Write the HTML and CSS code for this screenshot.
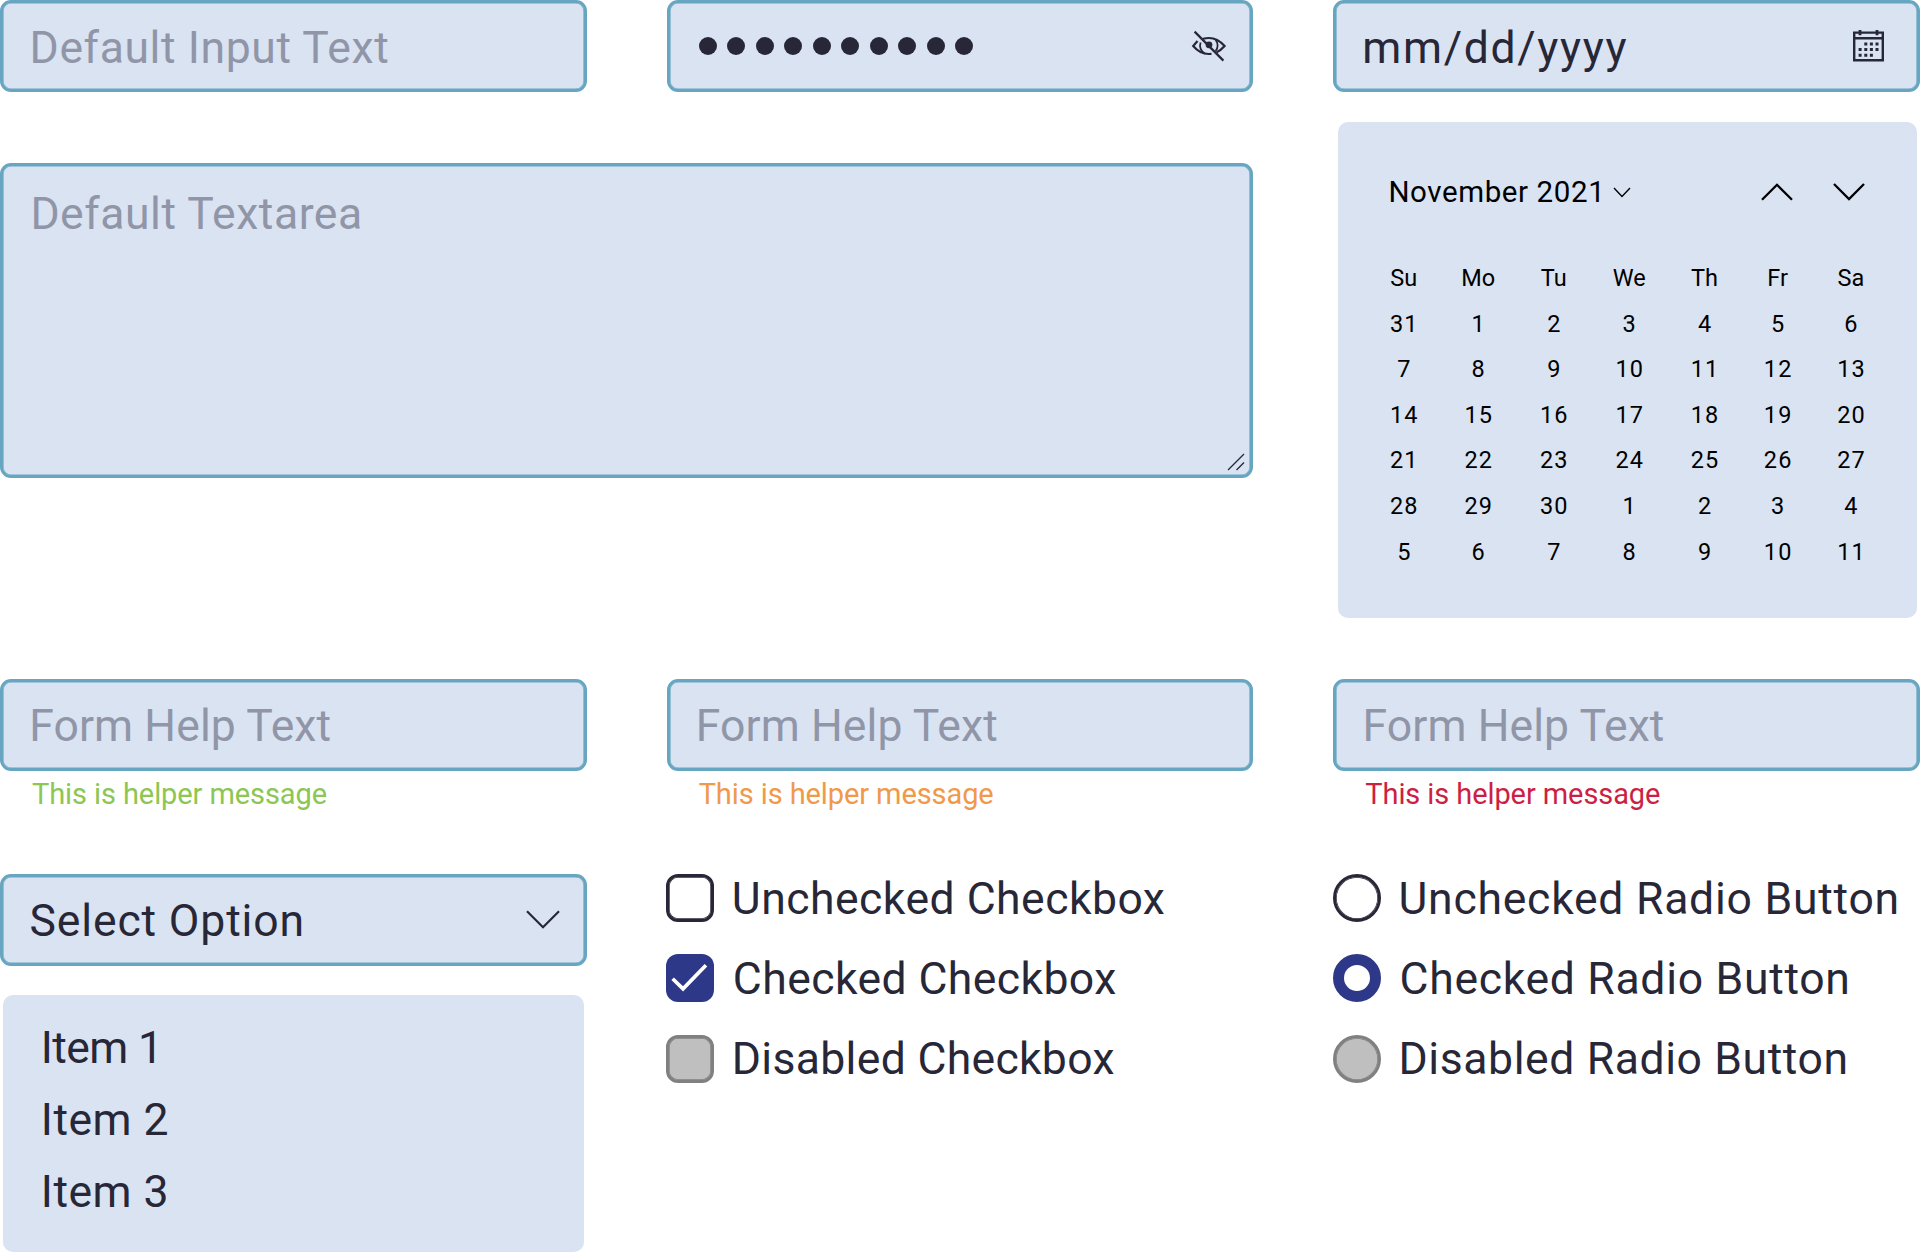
FILE: index.html
```
<!DOCTYPE html>
<html lang="en">
<head>
<meta charset="utf-8">
<title>Form elements</title>
<link rel="stylesheet" href="styles.css">
</head>
<body>
<main class="page">
  <section class="top">
    <div class="left">
      <div class="pair">
        <div class="field placeholder"><span class="t-input">Default Input Text</span></div>
        <div class="field password">
          <div class="dots"><i class="dot"></i><i class="dot"></i><i class="dot"></i><i class="dot"></i><i class="dot"></i><i class="dot"></i><i class="dot"></i><i class="dot"></i><i class="dot"></i><i class="dot"></i></div>
          <svg class="eye" width="36" height="32" viewBox="0 0 36 32" fill="none" stroke="currentColor" stroke-width="2.2">
            <path d="M6.5 11 L2.2 16 Q9 24 17.8 24 L20.5 23.8"/>
            <path d="M12 8.8 Q15 8 18 8 Q26.5 8 33.6 16 Q30 20.2 25.6 22.2"/>
            <path d="M9.6 12.5 C8 17 10 21.5 13.8 23.6" stroke-width="1.8"/>
            <path d="M24.6 9.8 C27.4 13 27.2 18 24.6 21" stroke-width="1.8"/>
            <circle cx="18" cy="14.8" r="3.4" fill="currentColor" stroke="none"/>
            <path d="M3.6 1.6 L32.4 30.6"/>
          </svg>
        </div>
      </div>
      <div class="textarea placeholder">
        <span class="t-area">Default Textarea</span>
        <svg class="grip" width="18" height="18" viewBox="0 0 18 18" fill="none" stroke="currentColor" stroke-width="1.3">
          <path d="M1 17 L17 1 M9.5 17 L17 9.5"/>
        </svg>
      </div>
    </div>
    <div class="right">
      <div class="field">
        <span class="t-date">mm/dd/yyyy</span>
        <svg class="cal-icon" width="31" height="32" viewBox="0 0 31 32" fill="none" stroke="currentColor">
          <path d="M1.2 2.6 H29.8 V30.2 H1.2 Z M1.2 8.2 H29.8" stroke-width="2.4"/>
          <path d="M7 0 V5.2 M24 0 V5.2" stroke-width="2.8"/>
          <path d="M11.3 14 h3 M16.9 14 h3 M22.5 14 h3 M5.6 19.6 h3 M11.3 19.6 h3 M16.9 19.6 h3 M22.5 19.6 h3 M5.6 25.2 h3 M11.3 25.2 h3 M16.9 25.2 h3" stroke-width="3"/>
        </svg>
      </div>
      <div class="calendar">
        <div class="cal-head">
          <span class="t-month">November 2021</span>
          <svg class="mini" width="18" height="11" viewBox="0 0 18 11" fill="none" stroke="currentColor" stroke-width="1.4"><path d="M1 1 L9 9.4 L17 1"/></svg>
          <svg class="prev" width="32" height="18" viewBox="0 0 32 18" fill="none" stroke="currentColor" stroke-width="2.3"><path d="M1 16.8 L16 1.8 L31 16.8"/></svg>
          <svg class="next" width="32" height="18" viewBox="0 0 32 18" fill="none" stroke="currentColor" stroke-width="2.3"><path d="M1 1 L16 16 L31 1"/></svg>
        </div>
        <div class="week names"><span>Su</span><span>Mo</span><span>Tu</span><span>We</span><span>Th</span><span>Fr</span><span>Sa</span></div>
        <div class="week"><span>31</span><span>1</span><span>2</span><span>3</span><span>4</span><span>5</span><span>6</span></div>
        <div class="week"><span>7</span><span>8</span><span>9</span><span>10</span><span>11</span><span>12</span><span>13</span></div>
        <div class="week"><span>14</span><span>15</span><span>16</span><span>17</span><span>18</span><span>19</span><span>20</span></div>
        <div class="week"><span>21</span><span>22</span><span>23</span><span>24</span><span>25</span><span>26</span><span>27</span></div>
        <div class="week"><span>28</span><span>29</span><span>30</span><span>1</span><span>2</span><span>3</span><span>4</span></div>
        <div class="week"><span>5</span><span>6</span><span>7</span><span>8</span><span>9</span><span>10</span><span>11</span></div>
      </div>
    </div>
  </section>

  <section class="row">
    <div><div class="field lower placeholder"><span class="t-help">Form Help Text</span></div><p class="help ok">This is helper message</p></div>
    <div><div class="field lower placeholder"><span class="t-help">Form Help Text</span></div><p class="help warn">This is helper message</p></div>
    <div><div class="field lower placeholder"><span class="t-help">Form Help Text</span></div><p class="help error">This is helper message</p></div>
  </section>

  <section class="row">
    <div>
      <div class="field lower">
        <span class="t-select">Select Option</span>
        <svg class="chev" width="34" height="20" viewBox="0 0 34 20" fill="none" stroke="currentColor" stroke-width="2.2"><path d="M1 1.2 L17 17.2 L33 1.2"/></svg>
      </div>
      <ul class="list">
        <li class="one">Item 1</li>
        <li>Item 2</li>
        <li>Item 3</li>
      </ul>
    </div>
    <div class="options">
      <div class="option"><i class="box"></i><span class="t-uc">Unchecked Checkbox</span></div>
      <div class="option"><i class="box checked"><svg width="47" height="48" viewBox="0 0 48 48" fill="none" stroke="#fff" stroke-width="3.8"><path d="M6.8 24.8 L17.4 35 L40.8 11"/></svg></i><span class="t-cc">Checked Checkbox</span></div>
      <div class="option"><i class="box disabled"></i><span class="t-dc">Disabled Checkbox</span></div>
    </div>
    <div class="options">
      <div class="option"><i class="box radio"></i><span class="t-ur">Unchecked Radio Button</span></div>
      <div class="option"><i class="box radio selected"></i><span class="t-cr">Checked Radio Button</span></div>
      <div class="option"><i class="box radio disabled"></i><span class="t-dr">Disabled Radio Button</span></div>
    </div>
  </section>
</main>
</body>
</html>
```
FILE: styles.css
```
* { box-sizing: border-box; }

body {
  margin: 0;
  background: #fff;
  color: #272738;
  font-family: Roboto, "Liberation Sans", sans-serif;
  font-size: 44.5px;
}

svg { display: block; flex: none; }

.page {
  width: 1920px;
  height: 1252px;
  display: grid;
  grid-template-rows: 679px 195px 378px;
  overflow: hidden;
}

.top {
  display: grid;
  grid-template-columns: 1253.33px 586.67px;
  column-gap: 80px;
}

.pair, .row {
  display: grid;
  grid-template-columns: repeat(3, 586.66px);
  column-gap: 80px;
}
.pair { grid-template-columns: repeat(2, 586.66px); }

.field {
  height: 92px;
  padding: 4px 26px 0;
  display: flex;
  align-items: center;
  justify-content: space-between;
  border: 3px solid #67a6c1;
  border-radius: 11px;
  background: #dae3f2;
  box-shadow: inset 0 0 0 0.6px #67a6c1;
  line-height: 60px;
  white-space: nowrap;
}
.lower { padding-top: 2px; }

.placeholder { color: #9096a8; }

/* letter spacing per label */
.t-input { letter-spacing: 0.6px; margin-left: 0.6px; }
.t-area { letter-spacing: 0.53px; margin-left: 1.4px; }
.t-date { letter-spacing: 1.66px; }
.t-help { letter-spacing: 0.1px; margin-left: 0.2px; }
.t-select { letter-spacing: 0.85px; margin-left: 0.6px; }
.t-uc { letter-spacing: 0.48px; }
.t-cc { letter-spacing: 0.42px; padding-left: 1px; }
.t-dc { letter-spacing: 0.31px; }
.t-ur { letter-spacing: 0.75px; }
.t-cr { letter-spacing: 0.7px; padding-left: 1px; }
.t-dr { letter-spacing: 0.6px; }

.password { padding: 0 23.5px 0 29px; }
.dots { display: flex; gap: 10.3px; }
.dot {
  width: 18.2px;
  height: 18.2px;
  border-radius: 50%;
  background: #272738;
}
.cal-icon { margin: -4px 7px 0 0; }
.chev { margin: -3px -2px 0 0; }

.textarea {
  height: 315px;
  margin-top: 71px;
  padding: 18px 5px 4px 26px;
  display: flex;
  justify-content: space-between;
  border: 3px solid #67a6c1;
  border-radius: 11px;
  background: #dae3f2;
  box-shadow: inset 0 0 0 0.6px #67a6c1;
  line-height: 60px;
}
.grip { align-self: flex-end; color: #272738; }

.calendar {
  height: 496px;
  margin: 30px 3px 0 4.7px;
  padding: 44px 27.6px 0 28.8px;
  border-radius: 10px;
  background: #dae3f2;
  color: #000;
}

.cal-head {
  height: 52px;
  margin-bottom: 38.3px;
  padding-left: 21.6px;
  display: flex;
  align-items: center;
  font-size: 29.5px;
  line-height: 52px;
}
.t-month { width: 225px; letter-spacing: 0.6px; }
.prev { margin-left: 130px; }
.next { margin-left: 40px; }

.week {
  display: grid;
  grid-template-columns: 74px 74.8px 76.4px 74.4px 76.4px 69.8px 76.8px;
  font-size: 23.5px;
  line-height: 45.55px;
  text-align: center;
  letter-spacing: 1.1px;
  text-indent: 1px;
}
.names { letter-spacing: 0; text-indent: 0; }

.help {
  margin: 6px 0 0 32px;
  font-size: 29px;
  line-height: 34px;
  letter-spacing: -0.09px;
}
.ok { color: #8cc653; }
.warn { color: #f0994a; }
.error { color: #cc1f44; }

.list {
  width: 581px;
  height: 257px;
  margin: 29px 0 0 3px;
  padding: 17px 37.8px;
  list-style: none;
  border-radius: 10px;
  background: #dae3f2;
  line-height: 72.2px;
  letter-spacing: 0.5px;
}
.one { letter-spacing: -0.6px; }

.options { display: flex; flex-direction: column; gap: 32.3px; }
.option {
  height: 48px;
  margin-left: -0.8px;
  display: flex;
  align-items: center;
  gap: 18px;
  line-height: 50px;
  white-space: nowrap;
}
.option span { padding-top: 1px; }
.box {
  width: 48px;
  height: 48px;
  flex: none;
  border: 3px solid #272738;
  border-radius: 12px;
  box-shadow: inset 0 0 0 0.7px #272738;
}
.checked { border: 0; background: #2d3988; box-shadow: none; }
.radio { border-radius: 50%; }
.selected { border: 11px solid #2d3988; box-shadow: none; }
.disabled { border-color: #808080; background: #bfbfbf; box-shadow: inset 0 0 0 0.7px #808080; }
```
